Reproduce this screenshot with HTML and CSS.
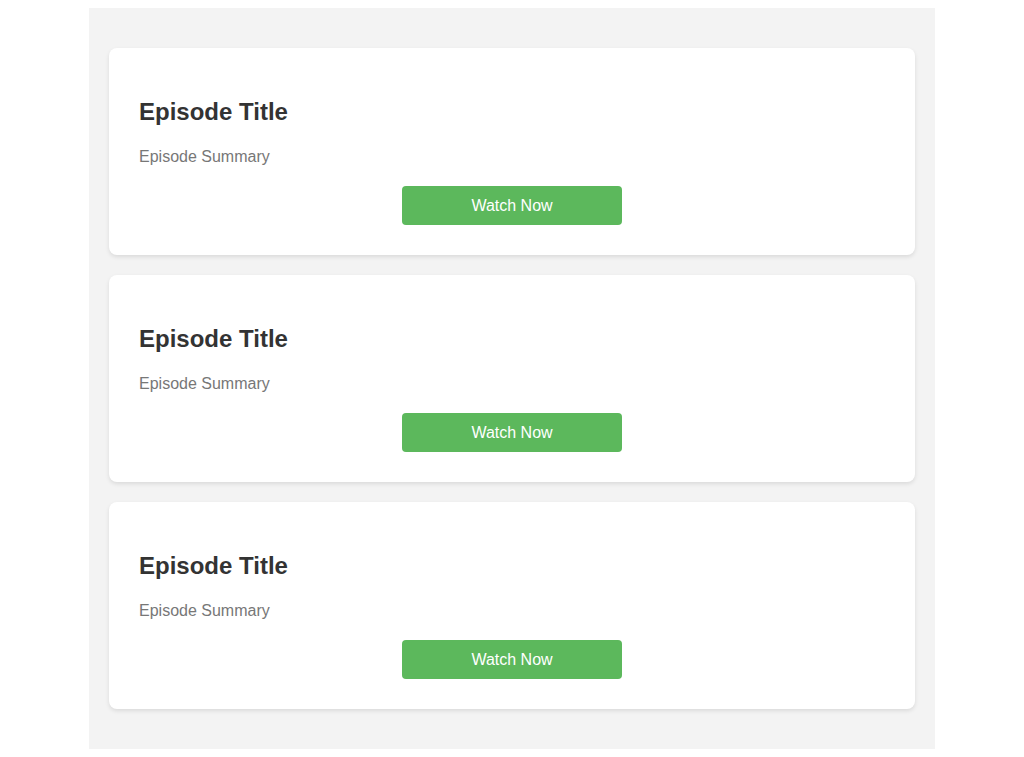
FILE: index.html
```html
<!DOCTYPE html>
<html>
<head>
<meta charset="utf-8">
<link rel="stylesheet" href="styles.css">
</head>
<body>
<div class="container">
  <div class="card">
    <h2 class="title">Episode Title</h2>
    <p class="summary">Episode Summary</p>
    <div class="actions"><button class="btn">Watch Now</button></div>
  </div>
  <div class="card">
    <h2 class="title">Episode Title</h2>
    <p class="summary">Episode Summary</p>
    <div class="actions"><button class="btn">Watch Now</button></div>
  </div>
  <div class="card">
    <h2 class="title">Episode Title</h2>
    <p class="summary">Episode Summary</p>
    <div class="actions"><button class="btn">Watch Now</button></div>
  </div>
</div>
</body>
</html>
```
FILE: styles.css
```css
body {
  margin: 8px;
  font-family: "Liberation Sans", Arial, sans-serif;
  background: #fff;
}
.container {
  width: 846px;
  margin: 0 auto;
  box-sizing: border-box;
  background: #f3f3f3;
  padding: 40px 20px;
  display: flex;
  flex-direction: column;
  gap: 20px;
}
.card {
  background: #fff;
  border-radius: 8px;
  box-shadow: 0 2px 4px rgba(0,0,0,0.1);
  padding: 30px;
  box-sizing: border-box;
}
.title {
  margin: 20px 0 0;
  font-size: 24px;
  line-height: 28px;
  font-weight: bold;
  color: #333;
}
.summary {
  margin: 22px 0 0;
  font-size: 16px;
  line-height: 18px;
  color: #777;
}
.actions {
  display: flex;
  justify-content: center;
  margin-top: 20px;
}
.btn {
  width: 220px;
  height: 39px;
  background: #5cb85c;
  color: #fff;
  border: none;
  border-radius: 4px;
  font-family: "Liberation Sans", Arial, sans-serif;
  font-size: 16px;
  padding: 0;
}
```
